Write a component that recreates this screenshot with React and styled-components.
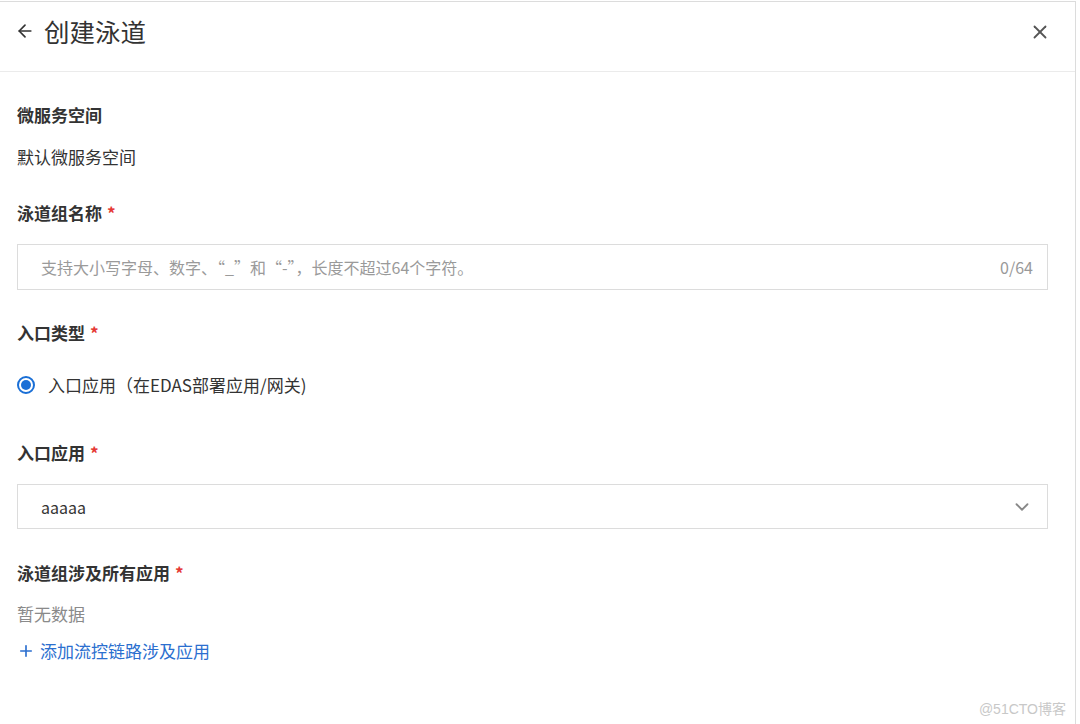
import React from 'react'
import styled, { createGlobalStyle } from 'styled-components'
import { ArrowLeft, X, ChevronDown, Plus } from 'lucide-react'

const GlobalStyle = createGlobalStyle`
  body {
    margin: 0;
    background: #fff;
    font-family: "Noto Sans CJK SC", "Noto Sans", sans-serif;
    color: #333;
  }
`

const Panel = styled.div`
  position: relative;
  width: 1075px;
  height: 722px;
  margin-top: 1px;
  border-top: 1px solid #dcdcdc;
  border-right: 1px solid #dcdcdc;
  background: #fff;
  overflow: hidden;
`

const Header = styled.div`
  height: 69px;
  display: flex;
  align-items: center;
  justify-content: space-between;
  padding: 0 24px 0 15px;
  border-bottom: 1px solid #ebebeb;
`

const Title = styled.div`
  display: flex;
  align-items: center;
  gap: 9px;
  font-size: 25.5px;
  color: #333;
  margin-top: -12px;
  svg {
    color: #333;
  }
`

const CloseBtn = styled.button`
  border: 0;
  background: none;
  padding: 0;
  display: flex;
  color: #555;
  margin-top: -10px;
  cursor: pointer;
`

const Body = styled.div`
  padding: 31px 27px 0 17px;
`

const Label = styled.div`
  font-size: 17px;
  line-height: 24px;
  font-weight: 700;
  color: #333;
  margin-top: ${(p) => p.$mt || 0}px;
  &::after {
    content: ${(p) => (p.$required ? '"*"' : 'none')};
    color: #e53935;
    margin-left: 5px;
    font-weight: 700;
  }
`

const Text = styled.div`
  font-size: 17px;
  line-height: 24px;
  color: ${(p) => p.$muted ? '#8a8a8a' : '#333'};
  margin-top: ${(p) => p.$mt || 0}px;
`

const InputBox = styled.div`
  margin-top: ${(p) => p.$mt || 0}px;
  height: ${(p) => p.$h}px;
  box-sizing: border-box;
  border: 1px solid #dcdcdc;
  display: flex;
  align-items: center;
  justify-content: space-between;
  padding: 0 14px 0 23px;
  font-size: 16px;
  color: #333;
`

const Placeholder = styled.span`
  color: #9a9a9a;
`

const Counter = styled.span`
  color: #999;
`

const RadioRow = styled.label`
  margin-top: ${(p) => p.$mt || 0}px;
  display: flex;
  align-items: center;
  gap: 13px;
  font-size: 17px;
  line-height: 24px;
  color: #333;
`

const RadioDot = styled.span`
  width: 18px;
  height: 18px;
  box-sizing: border-box;
  border-radius: 50%;
  border: 2px solid #1a6fd6;
  display: flex;
  align-items: center;
  justify-content: center;
  &::after {
    content: '';
    width: 10px;
    height: 10px;
    border-radius: 50%;
    background: #1a6fd6;
  }
`

const AddLink = styled.a`
  margin-top: ${(p) => p.$mt || 0}px;
  display: flex;
  align-items: center;
  gap: 5px;
  font-size: 17px;
  line-height: 24px;
  color: #2b6fcf;
  text-decoration: none;
  cursor: pointer;
`

const Watermark = styled.div`
  position: absolute;
  right: 9px;
  bottom: 6px;
  font-size: 14px;
  color: #c8c8c8;
  font-family: "Liberation Sans", "Noto Sans CJK SC", sans-serif;
`

const App = () => {
  return (
    <>
      <GlobalStyle />
      <Panel>
        <Header>
          <Title>
            <ArrowLeft size={20} strokeWidth={2} />
            创建泳道
          </Title>
          <CloseBtn>
            <X size={22} strokeWidth={2} />
          </CloseBtn>
        </Header>
        <Body>
          <Label>微服务空间</Label>
          <Text $mt={18}>默认微服务空间</Text>

          <Label $mt={32} $required>泳道组名称</Label>
          <InputBox $mt={19} $h={46}>
            <Placeholder>支持大小写字母、数字、“_”和“-”，长度不超过64个字符。</Placeholder>
            <Counter>0/64</Counter>
          </InputBox>

          <Label $mt={31} $required>入口类型</Label>
          <RadioRow $mt={28}>
            <RadioDot />
            入口应用（在EDAS部署应用/网关)
          </RadioRow>

          <Label $mt={44} $required>入口应用</Label>
          <InputBox $mt={19} $h={45}>
            <span>aaaaa</span>
            <ChevronDown size={22} color="#888" strokeWidth={2} />
          </InputBox>

          <Label $mt={32} $required>泳道组涉及所有应用</Label>
          <Text $mt={17} $muted>暂无数据</Text>
          <AddLink $mt={13}>
            <Plus size={18} strokeWidth={2.2} />
            添加流控链路涉及应用
          </AddLink>
        </Body>
        <Watermark>@51CTO博客</Watermark>
      </Panel>
    </>
  )
}

export default App
